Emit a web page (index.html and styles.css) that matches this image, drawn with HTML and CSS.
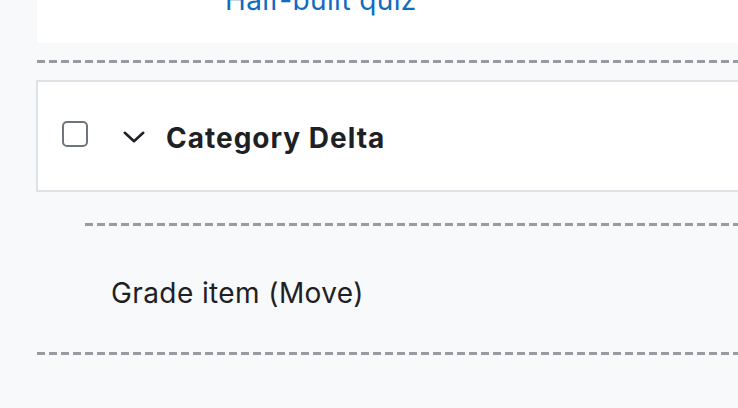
FILE: index.html
```html
<!DOCTYPE html>
<html lang="en">
<head>
<meta charset="utf-8">
<title>Gradebook setup</title>
<link rel="stylesheet" href="styles.css">
</head>
<body>
<div class="page">
  <div class="item-card">
    <a class="item-link" href="#">Half-built quiz</a>
  </div>
  <div class="dropzone"></div>
  <div class="category">
    <span class="checkbox"></span>
    <svg class="chevron" width="22" height="12" viewBox="0 0 22 12" aria-hidden="true">
      <polyline points="1.8,1.8 11,10.2 20.2,1.8" fill="none" stroke="#1d2125" stroke-width="2.6" stroke-linecap="round" stroke-linejoin="round"/>
    </svg>
    <span class="category-name">Category Delta</span>
  </div>
  <div class="dropzone dropzone-indent"></div>
  <div class="moving-item">Grade item (Move)</div>
  <div class="dropzone dropzone-last"></div>
</div>
</body>
</html>
```
FILE: styles.css
```css
html, body {
  margin: 0;
  padding: 0;
  background: #f8f9fa;
  overflow: hidden;
}

body {
  font-family: Inter, "Noto Sans", "Liberation Sans", sans-serif;
  color: #1d2125;
}

.page {
  margin-left: 37px;
  margin-right: -12px;
}

.item-card {
  background: #ffffff;
  margin-top: -30px;
  padding: 13px 0 26px 188px;
}

.item-link {
  display: block;
  font-size: 28px;
  line-height: 34px;
  letter-spacing: 0.35px;
  color: #0f6cbf;
  text-decoration: none;
}

.dropzone {
  height: 3px;
  margin-top: 17px;
  background: repeating-linear-gradient(to right, #979ba2 0 8px, transparent 8px 12px);
}

.category {
  margin-top: 17px;
  margin-left: -1px;
  border: 2px solid #dee2e6;
  background: #ffffff;
  height: 108px;
  box-sizing: content-box;
  display: flex;
  align-items: center;
  padding-left: 24px;
}

.checkbox {
  width: 22px;
  height: 22px;
  border: 2px solid #6f757c;
  border-radius: 5px;
  margin-top: -4px;
  flex: none;
}

.chevron {
  margin-left: 35px;
  margin-top: 2px;
  flex: none;
}

.category-name {
  margin-left: 21px;
  font-size: 28px;
  line-height: 34px;
  font-weight: 700;
  letter-spacing: 1px;
  margin-top: 4px;
}

.dropzone-indent {
  margin-top: 31px;
  margin-left: 48px;
}

.moving-item {
  margin-top: 50px;
  padding-left: 74px;
  font-size: 28px;
  line-height: 34px;
  letter-spacing: 0.4px;
}

.dropzone-last {
  margin-top: 42px;
}
```
